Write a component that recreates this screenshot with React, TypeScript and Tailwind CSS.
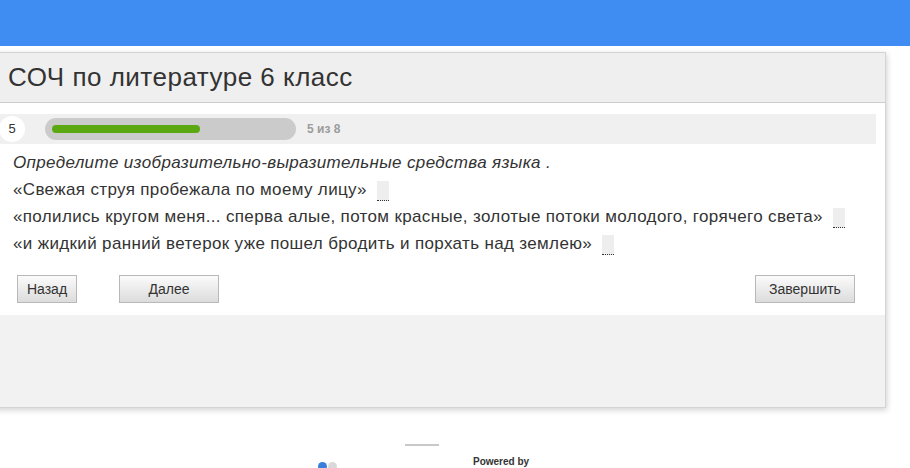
import { useState } from 'react';

const LINES = [
  '«Свежая струя пробежала по моему лицу»',
  '«полились кругом меня... сперва алые, потом красные, золотые потоки молодого, горячего света»',
  '«и жидкий ранний ветерок уже пошел бродить и порхать над землею»',
];

function Blank() {
  return (
    <span className="inline-block align-middle ml-[10px] w-[12px] h-[20px] bg-[#eeeeee] border-b border-dotted border-[#333]" />
  );
}

function Btn({ children, className = '' }: { children: React.ReactNode; className?: string }) {
  return (
    <button
      className={`h-[28px] border border-[#b8b8b8] bg-gradient-to-b from-[#fbfbfb] to-[#dcdcdc] text-[14px] text-[#333] ${className}`}
    >
      {children}
    </button>
  );
}

export default function App() {
  const [current] = useState(5);
  const total = 8;

  return (
    <div className="min-h-screen bg-white overflow-hidden font-['Liberation_Sans',Arial,sans-serif]">
      <div className="h-[46px] bg-[#3f8cf2]" />

      {/* Test card */}
      <div className="mt-[6px] ml-[-10px] w-[896px] border border-[#d4d4d4] shadow-[1px_2px_6px_rgba(0,0,0,0.18)]">
        <div className="h-[50px] bg-[#efefef] border-b border-[#cccccc] flex items-center pl-[17px]">
          <h1 className="text-[26px] tracking-[0.5px] text-[#333]">СОЧ по литературе 6 класс</h1>
        </div>

        <div className="bg-white pt-[11px] pb-[12px] pr-[9px]">
          {/* Progress */}
          <div className="h-[30px] bg-[#f0f0f0] flex items-center">
            <div className="ml-[8px] w-[26px] h-[26px] rounded-full bg-white flex items-center justify-center text-[13px] text-[#333]">
              {current}
            </div>
            <div className="ml-[20px] w-[251px] h-[22px] rounded-full bg-[#cbcbcb] flex items-center px-[7px]">
              <div className="h-[8px] rounded-full bg-[#5ba813]" style={{ width: `${(current / total) * 100}%` }} />
            </div>
            <span className="ml-[11px] text-[12px] font-bold text-[#9c9c9c]">
              {current} из {total}
            </span>
          </div>

          {/* Question */}
          <div className="mt-[5px] pl-[22px] text-[17px] tracking-[0.35px] leading-[27px] text-[#333]">
            <p className="italic">Определите изобразительно-выразительные средства языка .</p>
            {LINES.map((line) => (
              <p key={line}>
                {line}
                <Blank />
              </p>
            ))}
          </div>

          {/* Navigation */}
          <div className="mt-[18px] pl-[26px] pr-[21px] flex items-center">
            <Btn className="w-[60px]">Назад</Btn>
            <Btn className="ml-[42px] w-[100px]">Далее</Btn>
            <Btn className="ml-auto w-[100px]">Завершить</Btn>
          </div>
        </div>

        <div className="h-[92px] bg-[#f2f2f2]" />
      </div>

      {/* Footer */}
      <div className="mt-[36px] ml-[405px] w-[34px] h-[2px] bg-[#c8c8c8]" />
      <div className="mt-[10px] flex items-start">
        <div className="ml-[318px] mt-[6px] flex items-center gap-[1px]">
          <span className="w-[9px] h-[9px] rounded-full bg-[#3a7fd8]" />
          <span className="w-[9px] h-[9px] rounded-full bg-[#d9d9d9]" />
        </div>
        <span className="ml-[136px] text-[10px] leading-[12px] font-bold text-[#333]">Powered by</span>
      </div>
    </div>
  );
}
